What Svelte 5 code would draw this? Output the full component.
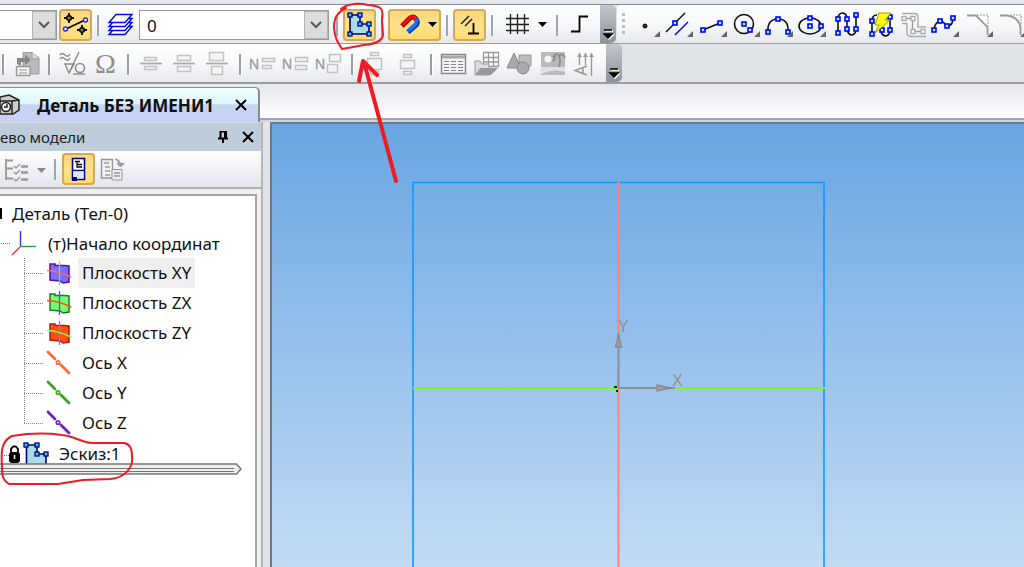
<script lang="ts">
	type Tool = { icon?: string; label?: string; active?: boolean; menu?: boolean; sep?: boolean; more?: boolean };

	const sep: Tool = { sep: true };

	const node = (x: number, y: number) =>
		`<rect x="${x - 2}" y="${y - 2}" width="4" height="4" fill="#9ff" stroke="#00f" stroke-width="1.6"/>`;
	const corner = (x: number, y: number) =>
		`<rect x="${x - 2}" y="${y - 2}" width="4" height="4" fill="#3cf" stroke="#00007a" stroke-width="1.3"/>`;
	const box = (x: number, y: number, w: number, h: number) =>
		`<rect x="${x}.5" y="${y}.5" width="${w}" height="${h}" fill="#f4f5f6" stroke="#c2c2c2" stroke-width="1.5"/>`;
	const caret = '<path d="M40 13h9l-4.500 5z" fill="#000"/>';
	const n =
		'<text x="2" y="21" font-family="Liberation Sans, sans-serif" font-size="14" fill="#999" stroke="#999" stroke-width=".3">N</text>';
	const star = (x: number, y: number) =>
		`<path d="M${x} ${y - 5}V${y + 5}M${x - 5} ${y}H${x + 5}" stroke="#000" stroke-width="1.8"/><circle cx="${x}" cy="${y}" r="2.3" fill="#a08030" stroke="#000" stroke-width="1.5"/>`;

	const icons: Record<string, string> = {
		snap: `<path d="M7 20L26 11" stroke="#000" stroke-width="1.6"/>${star(10, 9)}${star(23, 21)}<circle cx="6.5" cy="20" r="2" fill="#fff" stroke="#22f" stroke-width="1.4"/><circle cx="26.5" cy="11" r="2" fill="#fff" stroke="#22f" stroke-width="1.4"/>`,
		layers: [12, 8, 4, 0]
			.map((y) => `<path d="M12 ${5.5 + y}H28L21 ${13.5 + y}H5z" fill="#fff" stroke="#00f" stroke-width="1.4"/>`)
			.join(''),
		sketch: `<path d="M7 6H17V15H26V25H7z" fill="#acdce8" stroke="#00007a" stroke-width="1.6"/>${corner(7, 6)}${corner(17, 6)}${corner(17, 15)}${corner(26, 15)}${corner(26, 25)}${corner(7, 25)}`,
		magnet: `<path d="M14 17L21 10Q25 6 28 10" fill="none" stroke="#700" stroke-width="5"/><path d="M28 10Q31 14 27 17L20 23" fill="none" stroke="#003a9a" stroke-width="5"/><path d="M14 16L21 9.500Q25 6 28 10" fill="none" stroke="#f00d0d" stroke-width="3.500"/><path d="M28 10Q30 13 26 16.500L20 22" fill="none" stroke="#1672ff" stroke-width="3.500"/>${caret}`,
		perp: '<path d="M8 15L16 7M12 17L19 10" stroke="#222" stroke-width="1.5"/><path d="M20.500 14V24M15 24.500H26" stroke="#000" stroke-width="1.8"/>',
		grid: `<path d="M12.500 5V25M19.500 5V25M26.500 5V25M8 9.500H31M8 15.500H31M8 21.500H31" stroke="#222" stroke-width="1.4"/>${caret}`,
		step: '<path d="M8 22.500H16.500V7.500H25" fill="none" stroke="#000" stroke-width="1.8"/>',

		point: '<circle cx="17" cy="17" r="2" fill="#333" stroke="#000"/>',
		parallel: `<path d="M5 23L24 4" stroke="#111" stroke-width="1.5"/><path d="M14 26L27 13" stroke="#00f" stroke-width="1.5"/>${node(14, 14)}`,
		segment: `<path d="M8 21L25 14" stroke="#111" stroke-width="1.7"/>${node(8, 21)}${node(25, 14)}`,
		circle: `<circle cx="16" cy="15" r="9.500" fill="none" stroke="#111" stroke-width="1.6"/>${node(16, 15)}${node(22, 21)}`,
		arc: `<path d="M7 23Q6 10 17 10T27 23" fill="none" stroke="#111" stroke-width="1.6"/>${node(7, 23)}${node(17, 10)}${node(27, 23)}`,
		ellipse: `<ellipse cx="16" cy="17" rx="11" ry="8" fill="none" stroke="#111" stroke-width="1.6"/>${node(16, 9)}${node(16, 17)}${node(27, 17)}`,
		curve: `<path d="M10 24V10Q10 4 15 4Q19 5 19 10V20Q20 26 24 26Q28 25 28 20V6" fill="none" stroke="#111" stroke-width="1.6"/>${node(10, 10)}${node(10, 24)}${node(19, 10)}${node(19, 20)}${node(28, 6)}${node(28, 20)}`,
		auto: `<path d="M11 26V12Q11 6 16 6M20 22Q21 27 25 27Q29 26 29 21V8" fill="none" stroke="#111" stroke-width="1.6"/>${node(11, 12)}${node(11, 25)}${node(21, 21)}${node(29, 8)}${node(29, 21)}<path d="M18 4H30L24 11H29L14 24L18 16H14z" fill="#ff0" stroke="#a99400"/>`,
		gather: '<path d="M8 4.500H21Q24 5 24 8V18H32M8 14.500H13V25Q14 27.500 17 27.500H32" fill="none" stroke="#aaa" stroke-width="1.4"/><path d="M10 9.500H18.500V22.500H29" fill="none" stroke="#999" stroke-width="1.3"/><g fill="#fff" stroke="#aaa" stroke-width="1.3"><path d="M8 7.500h4v4H8zM17 7.500h4v4h-4zM17 20.500h4v4h-4zM27 20.500h4v4h-4z"/></g>',
		spline: `<path d="M7 21Q8 13 13 12Q16 12 20 17Q26 17 26 9" fill="none" stroke="#111" stroke-width="1.6"/>${node(7, 21)}${node(13, 12)}${node(20, 17)}${node(26, 9)}`,
		chamfer: '<path d="M6 6.500H15L26.500 18V26" fill="none" stroke="#999" stroke-width="1.8"/><path d="M16 6H27V17" fill="none" stroke="#999" stroke-dasharray="2 1"/>',
		fillet: '<path d="M6 6.500H13Q25 8 26.500 19V26" fill="none" stroke="#999" stroke-width="1.8"/><path d="M16 6H27V17" fill="none" stroke="#999" stroke-dasharray="2 1"/>',

		library: '<path d="M13 4.500H22L29 10V26H13z" fill="#bbb" stroke="#999"/><path d="M22 4V11H29" fill="#ddd" stroke="#999"/><path d="M7 16V10H15V6L21 12L15 17V14H11V18" fill="#888"/><path d="M6.500 18.500H20V27.500H6.500z" fill="#f3f3f3" stroke="#999" stroke-width="1.4"/><path d="M9 22H17M9 25H17" stroke="#999"/>',
		rough: '<path d="M4 7q2-3 5 0t5-1M4 11q2-3 5 0t5-1M9 16H18L13 25zM13 25L23 4" fill="none" stroke="#888" stroke-width="1.4"/><circle cx="24" cy="20" r="4.500" fill="none" stroke="#888" stroke-width="1.5"/><path d="M17 26H29" stroke="#888" stroke-width="1.4"/>',
		omega: '<text x="16.500" y="25" text-anchor="middle" font-family="Liberation Serif, serif" font-size="28" fill="#8e8e8e">Ω</text>',
		align1: `<path d="M5 15.500H27" stroke="#aaa" stroke-width="1.8"/>${box(9, 9, 12, 3)}${box(9, 18, 12, 3)}`,
		align2: `<path d="M5 15.500H27" stroke="#aaa" stroke-width="1.8"/>${box(9, 7, 13, 5)}${box(9, 18, 13, 5)}`,
		align3: `<path d="M5 15.500H27" stroke="#aaa" stroke-width="1.8"/>${box(8, 4, 14, 8)}${box(10, 18, 11, 8)}`,
		row1: `${n}${box(15, 10, 12, 3)}${box(15, 17, 9, 3)}`,
		row2: `${n}${box(15, 9, 12, 4)}${box(15, 17, 11, 4)}`,
		row3: `${n}${box(16, 6, 11, 7)}${box(14, 16, 10, 8)}`,
		spread1: `${box(11, 4, 8, 3)}${box(8, 10, 14, 11)}${box(11, 23, 8, 3)}`,
		spread2: `${box(11, 6, 8, 3)}${box(8, 12, 14, 8)}${box(11, 23, 8, 3)}`,
		table: '<path d="M3.500 6.500H27.500V25.500H3.500z" fill="#f4f4f4" stroke="#888" stroke-width="1.4"/><path d="M4 9H27" stroke="#aaa" stroke-width="3"/><path d="M6 13.500H25M6 16.500H25M6 19.500H25M6 22.500H25" stroke="#888" stroke-dasharray="5 2"/>',
		fragment: '<path d="M12.500 4.500H27.500V18.500H12.500zM12 9.500H27M12 14H27M17.500 4V18M22.500 4V18" fill="#fff" stroke="#999" stroke-width="1.3"/><path d="M4 27V13H9L11 16H18V27z" fill="#ddd" stroke="#999"/><path d="M4 27L9 20H27L20 27z" fill="#999"/>',
		shapes: '<path d="M15 7H27V18H15z" fill="#bbb" stroke="#999"/><path d="M10 5L17 20H3z" fill="#aaa" stroke="#888"/><circle cx="19" cy="20" r="6" fill="#aaa" stroke="#888"/>',
		picture: '<path d="M4 4H28V27H4z" fill="#bbb"/><circle cx="11" cy="11" r="3.500" fill="#f4f4f4"/><path d="M4 19H28V24Q16 20 4 26z" fill="#e0e0e0"/><path d="M16 9Q19 4 22 8Q26 4 28 10M22 8Q24 13 22 19M18 8Q18 12 16 13" fill="none" stroke="#8c8c8c" stroke-width="1.8"/>',
		arrows: '<path d="M9.500 5V17M15.500 5V17M21.500 5V28" stroke="#999" stroke-width="1.4"/><path d="M7 9l2.500-4l2.500 4zM13 9l2.500-4l2.500 4zM19 9l2.500-4l2.500 4z" fill="#999"/><path d="M17 18L5 22.500L17 27M13 20V25" fill="none" stroke="#999" stroke-width="1.5"/>',

		list: '<path d="M6 6V27M6 7.500H13M6 15.500H13M6 25.500H13" fill="none" stroke="#999" stroke-width="1.8"/><path d="M14 13l2 2l4-4M14 19l2 2l4-4M14 26l2 2l4-4" fill="none" stroke="#999" stroke-width="1.3"/><path d="M21 13.500H28M21 19.500H28M21 26.500H28" stroke="#999" stroke-width="2.500"/>',
		structure: '<path d="M10.500 5.500H22.500V26.500H10.500z" fill="#fff" stroke="#00007a" stroke-width="1.6"/><path d="M11 17.500H22" stroke="#00007a" stroke-width="1.5"/><path d="M11 18.500H21.500V25H11z" fill="#d8e6f0"/><path d="M10 24H15V28H10z" fill="#00007a"/><path d="M13 8.500H18M15 9V14H20M15 11.500H20" fill="none" stroke="#000" stroke-width="1.3"/>',
		copy: '<path d="M6.500 6.500H17.500V25H6.500z" fill="#f2f2f2" stroke="#999" stroke-width="1.4"/><path d="M9 10H14M10 14H15M10 18H15M10 22H15" stroke="#999" stroke-width="1.6"/><path d="M17 16.500H27V27H17z" fill="#eee" stroke="#999"/><path d="M19 20H25M19 23H25" stroke="#999" stroke-width="1.5"/><path d="M20 6Q25 6 25.500 12M22 10.500H29L25.500 14z" fill="#999" stroke="#999"/>'
	};

	const currentState: Tool[] = [
		{ icon: 'sketch', label: 'Эскиз', active: true },
		sep,
		{ icon: 'magnet', label: 'Привязки', active: true, menu: true },
		sep,
		{ icon: 'perp', label: 'Параметрический режим', active: true },
		sep,
		{ icon: 'grid', label: 'Сетка', menu: true },
		sep,
		{ icon: 'step', label: 'Ортогональное черчение' }
	];

	const geometry: Tool[] = [
		{ icon: 'point', label: 'Точка', more: true },
		{ icon: 'parallel', label: 'Параллельная прямая', more: true },
		{ icon: 'segment', label: 'Отрезок', more: true },
		{ icon: 'circle', label: 'Окружность', more: true },
		{ icon: 'arc', label: 'Дуга', more: true },
		{ icon: 'ellipse', label: 'Эллипс', more: true },
		{ icon: 'curve', label: 'Непрерывный ввод' },
		{ icon: 'auto', label: 'Автолиния' },
		{ icon: 'gather', label: 'Собрать контур' },
		{ icon: 'spline', label: 'Сплайн', more: true },
		{ icon: 'chamfer', label: 'Фаска', more: true },
		{ icon: 'fillet', label: 'Скругление', more: true }
	];

	const insert: Tool[] = [
		sep,
		{ icon: 'library', label: 'Вставить' },
		sep,
		{ icon: 'rough', label: 'Спецзнак' },
		{ icon: 'omega', label: 'Символ' },
		sep,
		{ icon: 'align1', label: 'Дробь малая' },
		{ icon: 'align2', label: 'Дробь средняя' },
		{ icon: 'align3', label: 'Дробь большая' },
		sep,
		{ icon: 'row1', label: 'Индекс малый' },
		{ icon: 'row2', label: 'Индекс средний' },
		{ icon: 'row3', label: 'Индекс большой' },
		sep,
		{ icon: 'spread1', label: 'Надстрока' },
		{ icon: 'spread2', label: 'Подстрока' },
		sep,
		{ icon: 'table', label: 'Таблица' },
		{ icon: 'fragment', label: 'Фрагмент' },
		{ icon: 'shapes', label: 'Фигуры' },
		{ icon: 'picture', label: 'Рисунок' },
		{ icon: 'arrows', label: 'Вертикальный текст' }
	];

	const planes = [
		{ name: 'Плоскость XY', fill: '#7a6cff', edge: '#5a0ca0', h: '#ff6a6a', v: '#5ff06a' },
		{ name: 'Плоскость ZX', fill: '#74ff74', edge: '#1e7a1e', h: '#ff4a10', v: '#4a4aff' },
		{ name: 'Плоскость ZY', fill: '#ff5208', edge: '#c01010', h: '#7dff6a', v: '#7a7aff' }
	];
	const axes = [
		{ name: 'Ось X', color: '#ff6a32' },
		{ name: 'Ось Y', color: '#35a51c' },
		{ name: 'Ось Z', color: '#6a22c8' }
	];

	let selected = 'Плоскость XY';
</script>

<div class="app">
	<div class="strip"></div>
	<div class="bar">
		<div class="tools state">
			<div class="combo style">
				<select aria-label="Вид"><option></option></select>
				<svg viewBox="0 0 24 28"><path d="M7 11l5 5l5-5" /></svg>
			</div>
			<button class="tool active" aria-label="Показать точки">
				<svg viewBox="0 0 33 32">{@html icons.snap}</svg>
			</button>
			<span class="sep"></span>
			<button class="tool" aria-label="Слои">
				<svg viewBox="0 0 33 32">{@html icons.layers}</svg>
			</button>
			<div class="combo layer">
				<select aria-label="Слой"><option>0</option></select>
				<svg viewBox="0 0 24 28"><path d="M7 11l5 5l5-5" /></svg>
			</div>
			<span class="sep"></span>
			{#each currentState as tool}
				{#if tool.sep}
					<span class="sep"></span>
				{:else}
					<button class="tool" class:active={tool.active} class:menu={tool.menu} aria-label={tool.label}>
						<svg viewBox={tool.menu ? '0 0 53 32' : '0 0 33 32'}>{@html icons[tool.icon]}</svg>
					</button>
				{/if}
			{/each}
		</div>
		<button class="overflow" aria-label="Параметры панели">
			<svg viewBox="0 0 16 38"><path d="M4 25h8M4 29h8l-4 4z" /></svg>
		</button>
		<div class="tools geometry">
			<span class="grip"></span>
			{#each geometry as tool}
				<button class="tool" aria-label={tool.label}>
					<svg viewBox="0 0 33 32">
						{@html icons[tool.icon]}
						{#if tool.more}<path d="M32 22V28H26z" fill="#666" />{/if}
					</svg>
				</button>
			{/each}
		</div>
	</div>

	<div class="bar second">
		<div class="tools insert">
			{#each insert as tool}
				{#if tool.sep}
					<span class="sep"></span>
				{:else}
					<button class="tool" aria-label={tool.label}>
						<svg viewBox="0 0 33 32">{@html icons[tool.icon]}</svg>
					</button>
				{/if}
			{/each}
		</div>
		<button class="overflow" aria-label="Параметры панели">
			<svg viewBox="0 0 16 38"><path d="M4 25h8M4 29h8l-4 4z" /></svg>
		</button>
	</div>

	<div class="tabs">
		<div class="tab">
			<svg class="part" viewBox="0 0 20 22">
				<path d="M0 3L9 1L19 6V16L13 20H0z" fill="#ccc" stroke="#222" stroke-width="1.5" />
				<path d="M0 7H12L19 6M12 7V20" fill="none" stroke="#222" stroke-width="1.5" />
				<circle cx="6" cy="13" r="4.500" fill="#eee" stroke="#222" stroke-width="1.6" />
				<path d="M4 13h3v-3" fill="none" stroke="#222" stroke-width="1.4" />
			</svg>
			<span class="title">Деталь БЕЗ ИМЕНИ1</span>
			<button class="plain" aria-label="Закрыть">
				<svg viewBox="0 0 12 12"><path d="M1 1l10 10M11 1L1 11" /></svg>
			</button>
		</div>
	</div>

	<main>
		<aside>
			<header>
				<h2>ево модели</h2>
				<button class="plain" aria-label="Закрепить">
					<svg viewBox="0 0 12 12"><path d="M3 0.500H9V7M3.500 0V7M8 0V7M1 7.500H11M6 8V12" stroke-width="1.5" /></svg>
				</button>
				<button class="plain" aria-label="Закрыть панель">
					<svg viewBox="0 0 12 12"><path d="M1 1l10 10M11 1L1 11" /></svg>
				</button>
			</header>
			<div class="panel-tools">
				<button class="tool" aria-label="Состав дерева">
					<svg viewBox="0 0 33 32">{@html icons.list}</svg>
				</button>
				<button class="drop" aria-label="Настройка состава">
					<svg viewBox="0 0 16 32"><path d="M4 15h9l-4.500 5z" fill="#888" /></svg>
				</button>
				<span class="sep"></span>
				<button class="tool active" aria-label="Структура модели">
					<svg viewBox="0 0 33 32">{@html icons.structure}</svg>
				</button>
				<button class="tool" aria-label="Дополнительное окно">
					<svg viewBox="0 0 33 32">{@html icons.copy}</svg>
				</button>
			</div>
			<div class="tree">
				<div class="row root"><span>Деталь (Тел-0)</span></div>
				<div class="row origin">
					<svg viewBox="0 0 48 30">
						<path d="M1 15.500H10" stroke="#777" stroke-dasharray="1 1" />
						<path d="M20.500 3V18" stroke="#33f" stroke-width="1.4" />
						<path d="M20 18.500H36" stroke="#2a9a4a" stroke-width="1.4" />
						<path d="M20 19L12 27" stroke="#f33" stroke-width="1.4" />
					</svg>
					<span>(т)Начало координат</span>
				</div>
				<ul>
					{#each planes as plane}
						<li>
							<svg viewBox="0 0 33 30">
								<path d="M7 6H12V7.500H21L26 8V24L20 25L17 23L7 22z" fill={plane.fill} stroke={plane.edge} stroke-width="1.5" />
								<path d="M16.500 3V27" stroke={plane.v} stroke-width="1.3" />
								<path d="M4 12.500Q16 13 28 19" fill="none" stroke={plane.h} stroke-width="1.6" />
							</svg>
							<button
								class="label"
								class:selected={selected === plane.name}
								on:click={() => (selected = plane.name)}>{plane.name}</button
							>
						</li>
					{/each}
					{#each axes as axis}
						<li>
							<svg viewBox="0 0 33 30">
								<path d="M5 4L12 11M18 17L26 25" stroke={axis.color} stroke-width="2.800" stroke-linecap="round" />
								<circle cx="15" cy="14.500" r="1.800" fill="#ddd" stroke={axis.color} stroke-width="1.500" />
							</svg>
							<button
								class="label"
								class:selected={selected === axis.name}
								on:click={() => (selected = axis.name)}>{axis.name}</button
							>
						</li>
					{/each}
				</ul>
				<div class="row sketch">
					<svg viewBox="0 0 54 30">
						<path d="M4 17.500H9" stroke="#777" stroke-dasharray="1 1" />
						<path d="M11 15V11Q14.500 5.500 18 11V15" fill="none" stroke="#000" stroke-width="1.8" />
						<rect x="9" y="14" width="11" height="11" rx="3" fill="#000" />
						<path d="M14.500 17V21" stroke="#fff" stroke-width="1.5" />
						<path d="M26.500 7H37V16H46V30H26.500z" fill="#acdce8" stroke="#00007a" stroke-width="1.6" />
						{@html corner(26, 7) + corner(37, 7) + corner(37, 16) + corner(46, 16)}
					</svg>
					<span>Эскиз:1</span>
				</div>
				<svg class="rollback" viewBox="0 0 242 12">
					<path d="M-1 1H236.500L241 6L236.500 11H-1z" fill="#eee" stroke="#777" stroke-width="1.5" />
					<path d="M0 5.500H234M0 8.500H234" stroke="#777" />
				</svg>
			</div>
		</aside>

		<section class="viewport" aria-label="Модель">
			<svg>
				<path d="M141 600V58.500H552V600" fill="none" stroke="#1496ff" stroke-width="1.6" />
				<path d="M346.500 58V600" stroke="#ff8080" stroke-width="2" />
				<path d="M141 264H553" stroke="#7df51e" stroke-width="2" />
				<path d="M346.500 209V264H403" fill="none" stroke="#8c9096" stroke-width="1.8" />
				<path d="M343.500 223L346.500 211L349.500 223z" fill="#9aa0a6" stroke="#868a90" stroke-width="1.3" />
				<path d="M385 261L398 264L385 267z" fill="#9aa0a6" stroke="#868a90" stroke-width="1.3" />
				<path d="M342 262h3v2h-3zM344 266h2v2h-2z" fill="#222" />
				<text x="346" y="208">Y</text>
				<text x="400" y="262">X</text>
			</svg>
		</section>
	</main>

	<svg class="notes" viewBox="0 0 440 500">
		<path d="M341 9C348 3 360 3 368 5C381 6 384 8 382 20L383 35C382 42 374 44 364 45L342 49C337 41 335 38 334 28C334 19 336 13 346 8" stroke-width="2" />
		<path d="M396 181L364 62M359 81L363 61L377 75" stroke-width="4" />
		<path d="M12 436C30 433 48 433 62 435C75 436 79 442 92 443H124C131 444 132 450 132 456C134 470 122 478 110 479L83 480L58 484H9C2 480 2 474 2 466C1 452 1 441 12 436" stroke-width="2" />
	</svg>
</div>

<style>
	:global(body) {
		margin: 0;
	}
	.app {
		position: relative;
		display: flex;
		flex-direction: column;
		height: 100vh;
		overflow: hidden;
		background: #e0e4e8;
		color: #111;
		font-family: 'Noto Sans', 'Open Sans', sans-serif;
		font-size: 17px;
	}
	svg {
		display: block;
		flex: none;
	}
	button {
		padding: 0;
		border: none;
		background: transparent;
		color: inherit;
		font: inherit;
	}
	.strip {
		flex: none;
		height: 4px;
		background: #e6e8ef;
	}
	.bar {
		display: flex;
		flex: none;
		box-sizing: border-box;
		height: 40px;
		border-top: 1px solid #858a92;
		border-bottom: 1px solid #989ea6;
		background: #e0e4e8;
	}
	.second {
		border-top: none;
		border-bottom: 2px solid #999ca0;
	}
	.tools {
		display: flex;
		align-items: center;
		padding-top: 2px;
		background: linear-gradient(#fff, #f6f7f9 55%, #e6e8ec);
	}
	.state {
		padding-right: 4px;
	}
	.geometry {
		flex: 1;
		min-width: 0;
		margin: 0 -3px 0 1px;
		border-radius: 4px 0 0 4px;
	}
	.geometry .tool {
		flex: 1;
	}
	.insert {
		margin-left: -3px;
		padding-right: 3px;
	}
	.tool {
		box-sizing: border-box;
		flex: none;
		width: 33px;
		height: 32px;
		border-radius: 4px;
	}
	.tool svg {
		width: 33px;
		height: 32px;
		overflow: visible;
	}
	.tool.menu,
	.tool.menu svg {
		width: 53px;
	}
	.active {
		background: linear-gradient(#fbd577, #ffe18a 50%, #ffdc70);
		box-shadow: inset 0 0 0 2px #cfaa58;
	}
	.sep {
		flex: none;
		width: 2px;
		height: 21px;
		margin: 0 5px;
		background: #a2a7ad;
	}
	.insert .sep {
		width: 3px;
		background: linear-gradient(90deg, #989da4 2px, #fff 2px);
	}
	.overflow {
		flex: none;
		width: 16px;
		border-radius: 0 5px 5px 0;
		background: linear-gradient(#c3c7cc, #8e939a);
	}
	.overflow svg {
		width: 16px;
		height: 38px;
	}
	.overflow path {
		fill: #000;
		stroke: #000;
		stroke-width: 1.5;
		filter: drop-shadow(1px 1px 0 #fff);
	}
	.grip {
		flex: none;
		width: 3px;
		height: 24px;
		margin: 0 3px 0 5px;
		background: repeating-linear-gradient(#b4bfcb 0 3px, transparent 3px 6px);
	}
	.combo {
		display: grid;
		box-sizing: border-box;
		flex: none;
		height: 30px;
		border: 1px solid #9a9a9a;
		background: #fff;
	}
	.combo select,
	.combo svg {
		grid-area: 1 / 1;
	}
	.combo select {
		appearance: none;
		width: 100%;
		padding: 0 26px 0 7px;
		border: none;
		background: transparent;
		color: #111;
		font: inherit;
	}
	.combo svg {
		justify-self: end;
		width: 24px;
		height: 28px;
		background: #dcdcdc;
		box-shadow: inset 0 0 0 1px #b4b4b4;
		pointer-events: none;
	}
	.combo path {
		fill: none;
		stroke: #555;
		stroke-width: 2;
	}
	.style {
		width: 57px;
		margin-right: 2px;
		border-left: none;
	}
	.layer {
		width: 190px;
		margin: 0 2px;
	}
	.tabs {
		display: flex;
		flex: none;
		align-items: flex-end;
		height: 38px;
		background: linear-gradient(#e5e7ed, #fff 34px, #a2a5aa 34px 36px, #cbd5e2 36px);
	}
	.tab {
		display: flex;
		align-items: center;
		box-sizing: border-box;
		width: 260px;
		height: 35px;
		padding-right: 11px;
		border: 2px solid #888c92;
		border-width: 1px 2px 0 0;
		border-radius: 0 5px 0 0;
		background: linear-gradient(#edffff 0, #dff7fd 45%, #c6d3f3 50%, #c6d3f3);
	}
	.part {
		width: 20px;
		height: 22px;
	}
	.title {
		flex: 1;
		padding-left: 17px;
		font-weight: 700;
		white-space: nowrap;
	}
	.plain svg {
		width: 12px;
		height: 12px;
	}
	.plain path {
		fill: none;
		stroke: #000;
		stroke-width: 2;
	}
	main {
		display: flex;
		flex: 1;
		min-height: 0;
	}
	aside {
		display: flex;
		flex: none;
		flex-direction: column;
		box-sizing: border-box;
		width: 263px;
		margin-right: 7px;
		border-right: 2px solid #b4b6b8;
		border-top: 1px solid #d4dae0;
		background: #efefef;
	}
	header {
		display: flex;
		flex: none;
		align-items: center;
		gap: 13px;
		height: 28px;
		padding-right: 7px;
		background: #bfccda;
	}
	h2 {
		flex: 1;
		margin: 0;
		font-size: 15px;
		font-weight: 400;
		color: #222;
	}
	.panel-tools {
		display: flex;
		flex: none;
		align-items: center;
		height: 36px;
		background: linear-gradient(#fff, #e2e5eb);
		border-bottom: 2px solid #b0b2b6;
	}
	.panel-tools .sep {
		margin: 0 6px 0 5px;
	}
	.drop svg {
		width: 16px;
		height: 32px;
	}
	.tree {
		flex: 1;
		min-height: 0;
		margin: 5px 4px 0 0;
		padding-top: 2px;
		border-top: 2px solid #a6a6a6;
		border-right: 2px solid #a6a6a6;
		background: #fff;
	}
	.row,
	li {
		display: flex;
		align-items: center;
		height: 30px;
		white-space: nowrap;
	}
	.root::before {
		content: '';
		width: 2px;
		height: 11px;
		margin-right: 10px;
		background: #000;
	}
	.origin svg {
		width: 48px;
		height: 30px;
	}
	ul {
		margin: 0 0 0 24px;
		padding: 0;
		list-style: none;
	}
	li {
		background: repeating-linear-gradient(#888 0 1px, transparent 1px 2px) left top / 1px 100% no-repeat;
	}
	li:last-child {
		background-size: 1px 50%;
	}
	li::before {
		content: '';
		width: 19px;
		height: 1px;
		background: repeating-linear-gradient(90deg, #888 0 1px, transparent 1px 2px);
	}
	li svg {
		width: 33px;
		height: 30px;
	}
	.label {
		height: 30px;
		margin-left: 2px;
		padding: 0 4px;
		line-height: 30px;
	}
	.selected {
		background: #efefef;
	}
	.sketch svg {
		width: 54px;
		height: 30px;
	}
	.sketch span {
		padding-left: 5px;
	}
	.rollback {
		position: relative;
		width: 242px;
		height: 12px;
		margin-top: -5px;
	}
	.viewport {
		flex: 1;
		min-width: 0;
		border: 2px solid #75797d;
		border-width: 2px 0 0 2px;
		background: linear-gradient(#69a5e3, #c3dbf3);
	}
	.viewport svg {
		width: 100%;
		height: 100%;
	}
	.viewport text {
		fill: #8c9096;
		font-family: 'Liberation Sans', sans-serif;
		font-size: 16px;
	}
	.notes {
		position: absolute;
		top: 0;
		left: 0;
		width: 440px;
		height: 500px;
		pointer-events: none;
	}
	.notes path {
		fill: none;
		stroke: #ed1c24;
		stroke-linecap: round;
		stroke-linejoin: round;
	}
</style>
